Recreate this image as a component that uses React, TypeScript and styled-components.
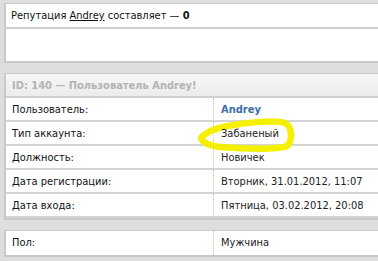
import React from 'react';
import styled, { createGlobalStyle } from 'styled-components';

const GlobalStyle = createGlobalStyle`
  html, body {
    margin: 0;
    padding: 0;
    background: #dedede;
    overflow: hidden;
  }
  body {
    font-family: 'DejaVu Sans Condensed', 'DejaVu Sans', Verdana, sans-serif;
    font-size: 11px;
  }
`;

const rows = [
  { label: 'Пользователь:', value: 'Andrey', strong: true },
  { label: 'Тип аккаунта:', value: 'Забаненый', marked: true },
  { label: 'Должность:', value: 'Новичек' },
  { label: 'Дата регистрации:', value: 'Вторник, 31.01.2012, 11:07' },
  { label: 'Дата входа:', value: 'Пятница, 03.02.2012, 20:08' },
];

const App: React.FunctionComponent = () => {
  return (
    <Page>
      <GlobalStyle />
      <Panel>
        <Notice>
          Репутация <UserLink>Andrey</UserLink> составляет — <b>0</b>
        </Notice>
        <Blank />
      </Panel>
      <Panel>
        <Header>ID: 140 — Пользователь Andrey!</Header>
        {rows.map((r) => (
          <Row key={r.label}>
            <Label>{r.label}</Label>
            <Value strong={r.strong}>
              {r.marked && <Marker />}
              <span>{r.value}</span>
            </Value>
          </Row>
        ))}
      </Panel>
      <Panel>
        <Row last>
          <Label>Пол:</Label>
          <Value>Мужчина</Value>
        </Row>
      </Panel>
    </Page>
  );
};

// yellow marker loop drawn around the account type
const Marker = () => (
  <MarkSvg width="100" height="36" viewBox="0 0 100 36">
    <path
      d="M30 9 C50 5 78 3 87 6 C94 9 95 24 89 29 C80 33 45 32 22 30 C12 29 5 26 3 21 C8 15 18 11 30 9 Z"
      fill="none"
      stroke="#f4f000"
      strokeWidth="6.5"
      strokeLinejoin="round"
    />
  </MarkSvg>
);

export default App;

const Page = styled.div`
  display: flex;
  flex-direction: column;
  gap: 10px;
  padding: 3px 0 0 4px;
  white-space: nowrap;
`;

const Panel = styled.div`
  background: #fff;
  border: solid #c9c9c9;
  border-width: 1px 0 2px 2px;
`;

const Notice = styled.div`
  height: 23px;
  line-height: 23px;
  padding-left: 5px;
  color: #111;
  border-bottom: 2px solid #cfcfcf;
  b {
    font-weight: bold;
  }
`;

const UserLink = styled.a`
  color: #111;
  text-decoration: underline;
`;

const Blank = styled.div`
  height: 32px;
`;

const Header = styled.div`
  height: 22px;
  line-height: 23px;
  padding-left: 6px;
  font-weight: bold;
  color: #b3b3b3;
  background: linear-gradient(#f7f7f7, #ececec);
  border-bottom: 2px solid #cfcfcf;
`;

const Row = styled.div<{ last?: boolean }>`
  display: grid;
  grid-template-columns: 207px 1fr;
  height: ${(p) => (p.last ? '24px' : '22px')};
  line-height: 24px;
  border-bottom: ${(p) => (p.last ? 'none' : '2px solid #d4d4d4')};
`;

const Label = styled.div`
  padding-left: 6px;
  color: #111;
`;

const Value = styled.div<{ strong?: boolean }>`
  position: relative;
  padding-left: 7px;
  border-left: 1px dotted #c4c4c4;
  color: ${(p) => (p.strong ? '#3a6ea5' : '#222')};
  font-weight: ${(p) => (p.strong ? 'bold' : 'normal')};
  span {
    position: relative;
  }
`;

const MarkSvg = styled.svg`
  position: absolute;
  left: -16px;
  top: -5px;
`;
